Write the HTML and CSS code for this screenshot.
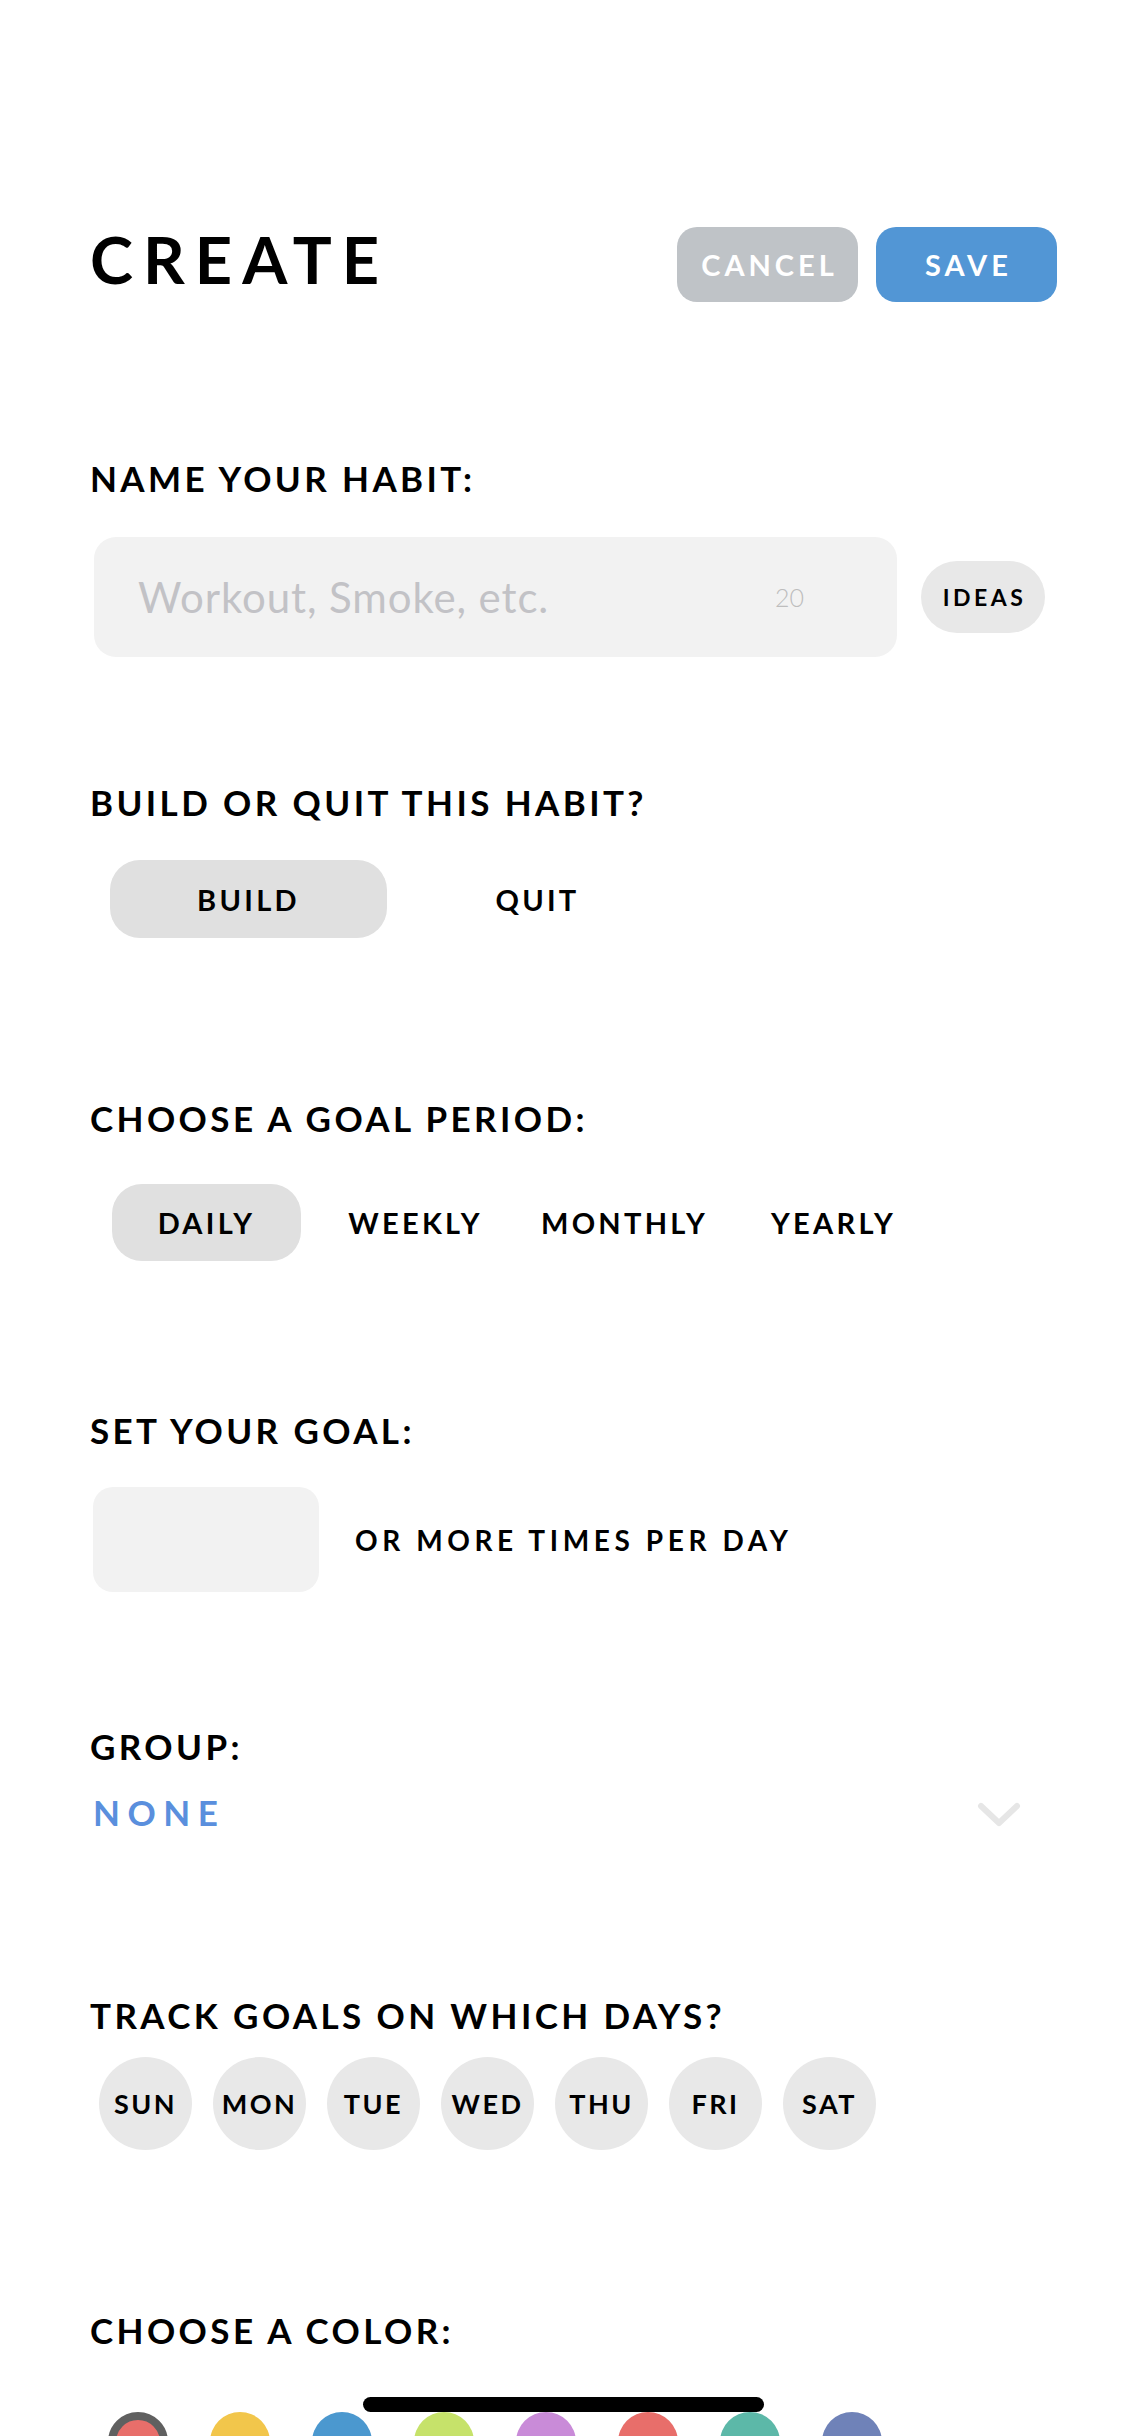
FILE: index.html
```html
<!DOCTYPE html>
<html lang="en">
<head>
<meta charset="utf-8">
<title>Create Habit</title>
<link rel="stylesheet" href="styles.css">
</head>
<body>
<div class="page">
  <header class="top">
    <h1 class="title">CREATE</h1>
    <div class="actions">
      <button class="btn btn-cancel">CANCEL</button>
      <button class="btn btn-save">SAVE</button>
    </div>
  </header>

  <section class="sec sec-name">
    <h2 class="heading">NAME YOUR HABIT:</h2>
    <div class="name-row">
      <div class="name-input">
        <span class="placeholder">Workout, Smoke, etc.</span>
        <span class="counter">20</span>
      </div>
      <div class="ideas">IDEAS</div>
    </div>
  </section>

  <section class="sec sec-type">
    <h2 class="heading">BUILD OR QUIT THIS HABIT?</h2>
    <div class="seg seg-type">
      <div class="opt opt-type active">BUILD</div>
      <div class="opt opt-type">QUIT</div>
    </div>
  </section>

  <section class="sec sec-period">
    <h2 class="heading">CHOOSE A GOAL PERIOD:</h2>
    <div class="seg seg-period">
      <div class="opt opt-period active">DAILY</div>
      <div class="opt opt-period">WEEKLY</div>
      <div class="opt opt-period">MONTHLY</div>
      <div class="opt opt-period">YEARLY</div>
    </div>
  </section>

  <section class="sec sec-goal">
    <h2 class="heading">SET YOUR GOAL:</h2>
    <div class="goal-row">
      <div class="goal-input"></div>
      <span class="goal-text">OR MORE TIMES PER DAY</span>
    </div>
  </section>

  <section class="sec sec-group">
    <h2 class="heading">GROUP:</h2>
    <div class="group-row">
      <span class="group-value">NONE</span>
      <svg class="chevron" width="44" height="26" viewBox="0 0 44 26" aria-hidden="true">
        <path d="M4 4 L22 21 L40 4" fill="none" stroke="#e6e6e6" stroke-width="6" stroke-linecap="round" stroke-linejoin="round"/>
      </svg>
    </div>
  </section>

  <section class="sec sec-days">
    <h2 class="heading">TRACK GOALS ON WHICH DAYS?</h2>
    <div class="days">
      <div class="day">SUN</div>
      <div class="day">MON</div>
      <div class="day">TUE</div>
      <div class="day">WED</div>
      <div class="day">THU</div>
      <div class="day">FRI</div>
      <div class="day">SAT</div>
    </div>
  </section>

  <section class="sec sec-color">
    <h2 class="heading">CHOOSE A COLOR:</h2>
    <div class="colors">
      <div class="swatch selected c-red"></div>
      <div class="swatch c-yellow"></div>
      <div class="swatch c-blue"></div>
      <div class="swatch c-green"></div>
      <div class="swatch c-purple"></div>
      <div class="swatch c-red"></div>
      <div class="swatch c-teal"></div>
      <div class="swatch c-indigo"></div>
    </div>
  </section>
</div>
<div class="home-indicator"></div>
</body>
</html>
```

FILE: styles.css
```css
html, body {
  margin: 0;
  padding: 0;
  width: 1125px;
  height: 2436px;
  overflow: hidden;
  background: #ffffff;
}

body {
  font-family: "Lato", "Noto Sans", sans-serif;
  color: #000;
  position: relative;
}

.page {
  padding: 227px 68px 0 90px;
}

.top {
  display: flex;
  justify-content: space-between;
  align-items: flex-start;
  height: 75px;
}

.title {
  margin: 0;
  font-size: 65px;
  line-height: 65px;
  font-weight: 700;
  letter-spacing: 10px;
}

.actions {
  display: flex;
  gap: 18px;
}

.btn {
  width: 181px;
  height: 75px;
  border: none;
  border-radius: 20px;
  color: #fff;
  font-family: "Lato", "Noto Sans", sans-serif;
  font-size: 29px;
  font-weight: 700;
  letter-spacing: 4px;
  padding: 0 0 0 4px;
}

.btn-cancel { background: #bfc3c7; }
.btn-save { background: #5296d5; }

.heading {
  margin: 0;
  font-size: 35px;
  line-height: 40px;
  font-weight: 700;
  letter-spacing: 3.4px;
}

.sec-name { margin-top: 156px; }
.sec-type { margin-top: 125px; }
.sec-period { margin-top: 160px; }
.sec-goal { margin-top: 149px; }
.sec-group { margin-top: 134px; }
.sec-days { margin-top: 163px; }
.sec-color { margin-top: 160px; }

/* name */
.name-row {
  margin-top: 39px;
  margin-left: 4px;
  display: flex;
  align-items: center;
  gap: 24px;
}

.name-input {
  width: 803px;
  height: 120px;
  background: #f2f2f2;
  border-radius: 22px;
  display: flex;
  align-items: center;
  box-sizing: border-box;
  padding-left: 44px;
  padding-right: 93px;
}

.placeholder {
  flex: 1;
  font-size: 42px;
  color: #c2c2c6;
  letter-spacing: 0.9px;
}

.counter {
  font-size: 25px;
  font-weight: 300;
  color: #bdbdbd;
}

.ideas {
  width: 124px;
  height: 72px;
  border-radius: 36px;
  background: #e8e8e8;
  display: flex;
  align-items: center;
  justify-content: center;
  font-size: 23px;
  font-weight: 700;
  letter-spacing: 3.5px;
  padding-left: 3px;
  box-sizing: border-box;
}

/* segmented options */
.seg {
  display: flex;
}

.opt {
  display: flex;
  align-items: center;
  justify-content: center;
  font-weight: 700;
  border-radius: 30px;
}

.opt.active { background: #e0e0e0; }

.seg-type {
  margin-top: 38px;
  margin-left: 20px;
  gap: 12px;
}

.opt-type {
  width: 277px;
  height: 78px;
  font-size: 29px;
  letter-spacing: 3.3px;
}

.seg-period {
  margin-top: 46px;
  margin-left: 22px;
  gap: 20px;
}

.opt-period {
  width: 189px;
  height: 77px;
  font-size: 29px;
  letter-spacing: 3.3px;
}

/* goal */
.goal-row {
  margin-top: 37px;
  margin-left: 3px;
  display: flex;
  align-items: center;
  gap: 36px;
}

.goal-input {
  width: 226px;
  height: 105px;
  background: #f2f2f2;
  border-radius: 20px;
}

.goal-text {
  font-size: 28px;
  font-weight: 700;
  letter-spacing: 4.6px;
}

/* group */
.group-row {
  margin-top: 26px;
  margin-left: 3px;
  margin-right: 36px;
  display: flex;
  justify-content: space-between;
  align-items: center;
  height: 40px;
}

.group-value {
  font-size: 35px;
  line-height: 40px;
  font-weight: 700;
  letter-spacing: 7.5px;
  color: #5a8fdd;
}

.chevron {
  display: block;
  margin-top: 6px;
}

/* days */
.days {
  margin-top: 22px;
  margin-left: 9px;
  display: flex;
  gap: 21px;
}

.day {
  width: 93px;
  height: 93px;
  border-radius: 50%;
  background: #e8e8e8;
  display: flex;
  align-items: center;
  justify-content: center;
  font-size: 27px;
  font-weight: 700;
  letter-spacing: 2.5px;
}

/* colors */
.colors {
  margin-top: 62px;
  margin-left: 18px;
  display: flex;
  gap: 42px;
}

.swatch {
  width: 60px;
  height: 60px;
  border-radius: 50%;
  box-sizing: border-box;
}

.swatch.selected { border: 8px solid #606060; }

.c-red { background: #e86e6a; }
.c-yellow { background: #f2c64b; }
.c-blue { background: #4b98cf; }
.c-green { background: #c6e26a; }
.c-purple { background: #c98bd8; }
.c-teal { background: #5cb8a8; }
.c-indigo { background: #6f82b8; }

.home-indicator {
  position: absolute;
  left: 363px;
  top: 2397px;
  width: 401px;
  height: 15px;
  border-radius: 8px;
  background: #000;
}
```
